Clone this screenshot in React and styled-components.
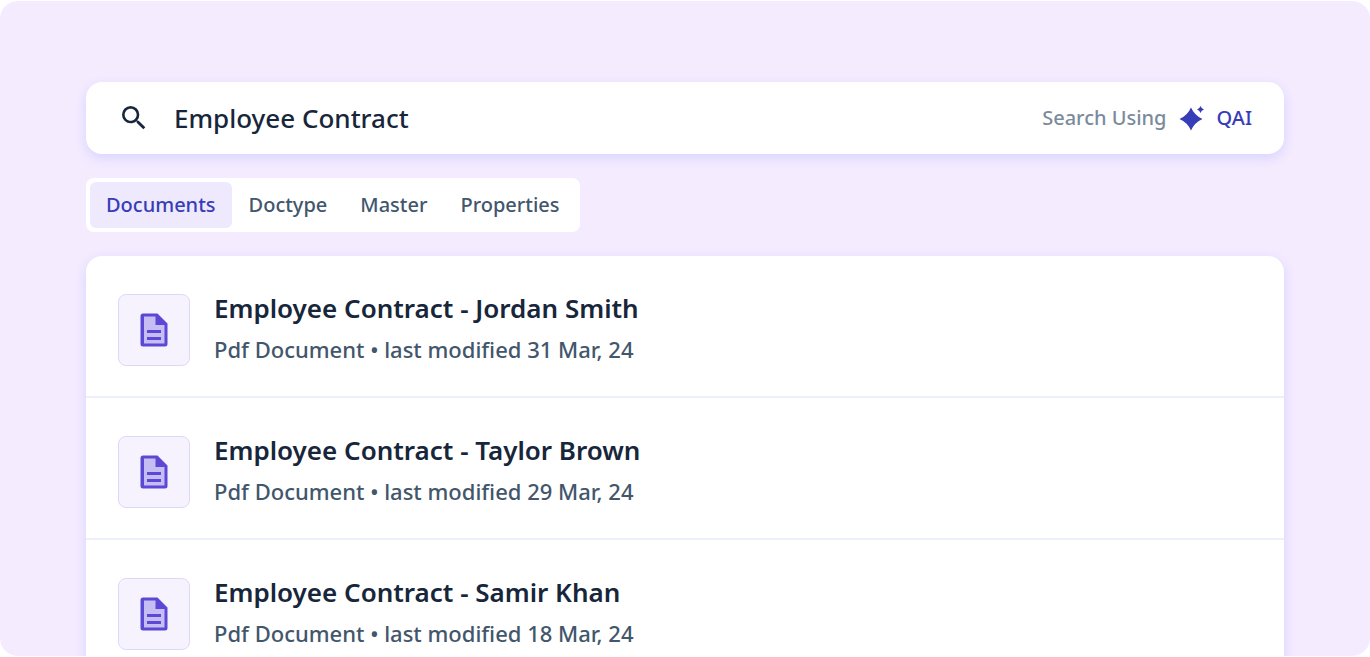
import React, { useState } from "react";
import styled, { createGlobalStyle } from "styled-components";

const GlobalStyle = createGlobalStyle`
  *, *::before, *::after { box-sizing: border-box; }
  body {
    margin: 0;
    background: #ffffff;
    font-family: "Noto Sans", "Open Sans", sans-serif;
    color: #17263a;
  }
`;

const Frame = styled.main`
  display: flex;
  flex-direction: column;
  gap: 24px;
  height: 100vh;
  padding: 81px 86px 0;
  border: solid #ffffff;
  border-width: 1px 0;
  border-radius: 18px;
  background: #f4ebff;
  background-clip: padding-box;
  overflow: hidden;
`;

const SearchBar = styled.form`
  flex: none;
  display: flex;
  align-items: center;
  height: 72px;
  padding: 0 32px;
  border-radius: 16px;
  background: #ffffff;
  box-shadow: 0 4px 12px rgba(72, 96, 250, 0.16);
`;

const SearchLabel = styled.label`
  display: flex;
  margin-right: 24px;
`;

const SearchInput = styled.input`
  flex: 1;
  min-width: 0;
  padding: 0;
  border: 0;
  outline: 0;
  background: transparent;
  color: #17263a;
  font: 500 26px/36px "Noto Sans", sans-serif;
`;

const Engine = styled.button`
  display: flex;
  align-items: center;
  gap: 12px;
  padding: 0;
  border: 0;
  background: transparent;
  color: #373db7;
  font: 500 20px/28px "Noto Sans", sans-serif;
  cursor: pointer;
`;

const EngineHint = styled.span`
  color: #7b8b9d;
`;

const Tabs = styled.nav`
  flex: none;
  align-self: flex-start;
  display: flex;
  gap: 1px;
  padding: 4px;
  border-radius: 8px;
  background: #ffffff;
`;

const Tab = styled.button`
  height: 46px;
  padding: 0 16px;
  border: 0;
  border-radius: 6px;
  background: ${({ $active }) => ($active ? "#efe9fe" : "transparent")};
  color: ${({ $active }) => ($active ? "#373db7" : "#42566c")};
  font: 500 20px/28px "Noto Sans", sans-serif;
  cursor: pointer;
`;

const Results = styled.ul`
  flex: none;
  margin: 0;
  padding: 0;
  border-radius: 16px;
  background: #ffffff;
  box-shadow: 0 4px 12px rgba(72, 96, 250, 0.16);
  list-style: none;
`;

const Result = styled.li`
  display: flex;
  gap: 24px;
  padding: 38px 32px 30px;
  border-bottom: 2px solid #ecf0fd;
`;

const FileTile = styled.span`
  flex: none;
  display: grid;
  place-items: center;
  width: 72px;
  height: 72px;
  border: 1px solid #ddd8fb;
  border-radius: 8px;
  background: #f6f3ff;
`;

const ResultText = styled.div`
  display: flex;
  flex-direction: column;
  gap: 12px;
`;

const ResultTitle = styled.h2`
  margin: 0;
  font-size: 26px;
  font-weight: 600;
  line-height: 28px;
`;

const ResultMeta = styled.p`
  margin: 0;
  color: #42566c;
  font-size: 22px;
  font-weight: 500;
  line-height: 30px;
`;

const SearchIcon = () => (
  <svg width="32" height="32" viewBox="0 0 24 24" fill="#17263a" aria-hidden="true">
    <path d="M15.5 14h-.79l-.28-.27A6.47 6.47 0 0 0 16 9.5 6.5 6.5 0 1 0 9.5 16c1.61 0 3.09-.59 4.23-1.57l.27.28v.79l5 4.99L20.49 19l-4.99-5zm-6 0C7.01 14 5 11.99 5 9.5S7.01 5 9.5 5 14 7.01 14 9.5 11.99 14 9.5 14z" />
  </svg>
);

const SparkIcon = () => (
  <svg width="26" height="26" viewBox="0 0 26 26" fill="#373db7" aria-hidden="true">
    <path d="M12 2.500Q15.500 10.500 23.500 14Q15.500 17.500 12 25.500Q8.500 17.500 .5 14Q8.500 10.500 12 2.500Z" />
    <path d="M21.500 1Q22.400 3.600 25 4.500Q22.400 5.400 21.500 8Q20.600 5.400 18 4.500Q20.600 3.600 21.500 1Z" />
  </svg>
);

const FileIcon = () => (
  <svg width="28" height="34" viewBox="0 0 28 34" aria-hidden="true">
    <path d="M3 2H17L26 11V32H3Z" fill="#c5bdf3" />
    <path
      d="M3 .5H17.500L27.500 10.500V31A2.500 2.500 0 0 1 25 33.500H3A2.500 2.500 0 0 1 .5 31V3A2.500 2.500 0 0 1 3 .5ZM4 3.500V30.500H24.500V12H15.500V3.500Z"
      fill="#5b49d6"
      fillRule="evenodd"
    />
    <path d="M7 17H21V20H7ZM7 24H21V27H7Z" fill="#5b49d6" />
  </svg>
);

const tabs = ["Documents", "Doctype", "Master", "Properties"];

const documents = [
  { owner: "Jordan Smith", modified: "31 Mar, 24" },
  { owner: "Taylor Brown", modified: "29 Mar, 24" },
  { owner: "Samir Khan", modified: "18 Mar, 24" },
];

export default function App() {
  const [active, setActive] = useState("Documents");
  const [query, setQuery] = useState("Employee Contract");

  return (
    <>
      <GlobalStyle />
      <Frame>
        <SearchBar role="search" onSubmit={(e) => e.preventDefault()}>
          <SearchLabel htmlFor="query" aria-label="Search">
            <SearchIcon />
          </SearchLabel>
          <SearchInput id="query" value={query} onChange={(e) => setQuery(e.target.value)} />
          <Engine type="submit">
            <EngineHint>Search Using</EngineHint>
            <SparkIcon />
            <span>QAI</span>
          </Engine>
        </SearchBar>
        <Tabs>
          {tabs.map((name) => (
            <Tab
              key={name}
              type="button"
              $active={name === active}
              aria-pressed={name === active}
              onClick={() => setActive(name)}
            >
              {name}
            </Tab>
          ))}
        </Tabs>
        <Results>
          {documents.map(({ owner, modified }) => (
            <Result key={owner}>
              <FileTile>
                <FileIcon />
              </FileTile>
              <ResultText>
                <ResultTitle>Employee Contract - {owner}</ResultTitle>
                <ResultMeta>Pdf Document • last modified {modified}</ResultMeta>
              </ResultText>
            </Result>
          ))}
        </Results>
      </Frame>
    </>
  );
}
